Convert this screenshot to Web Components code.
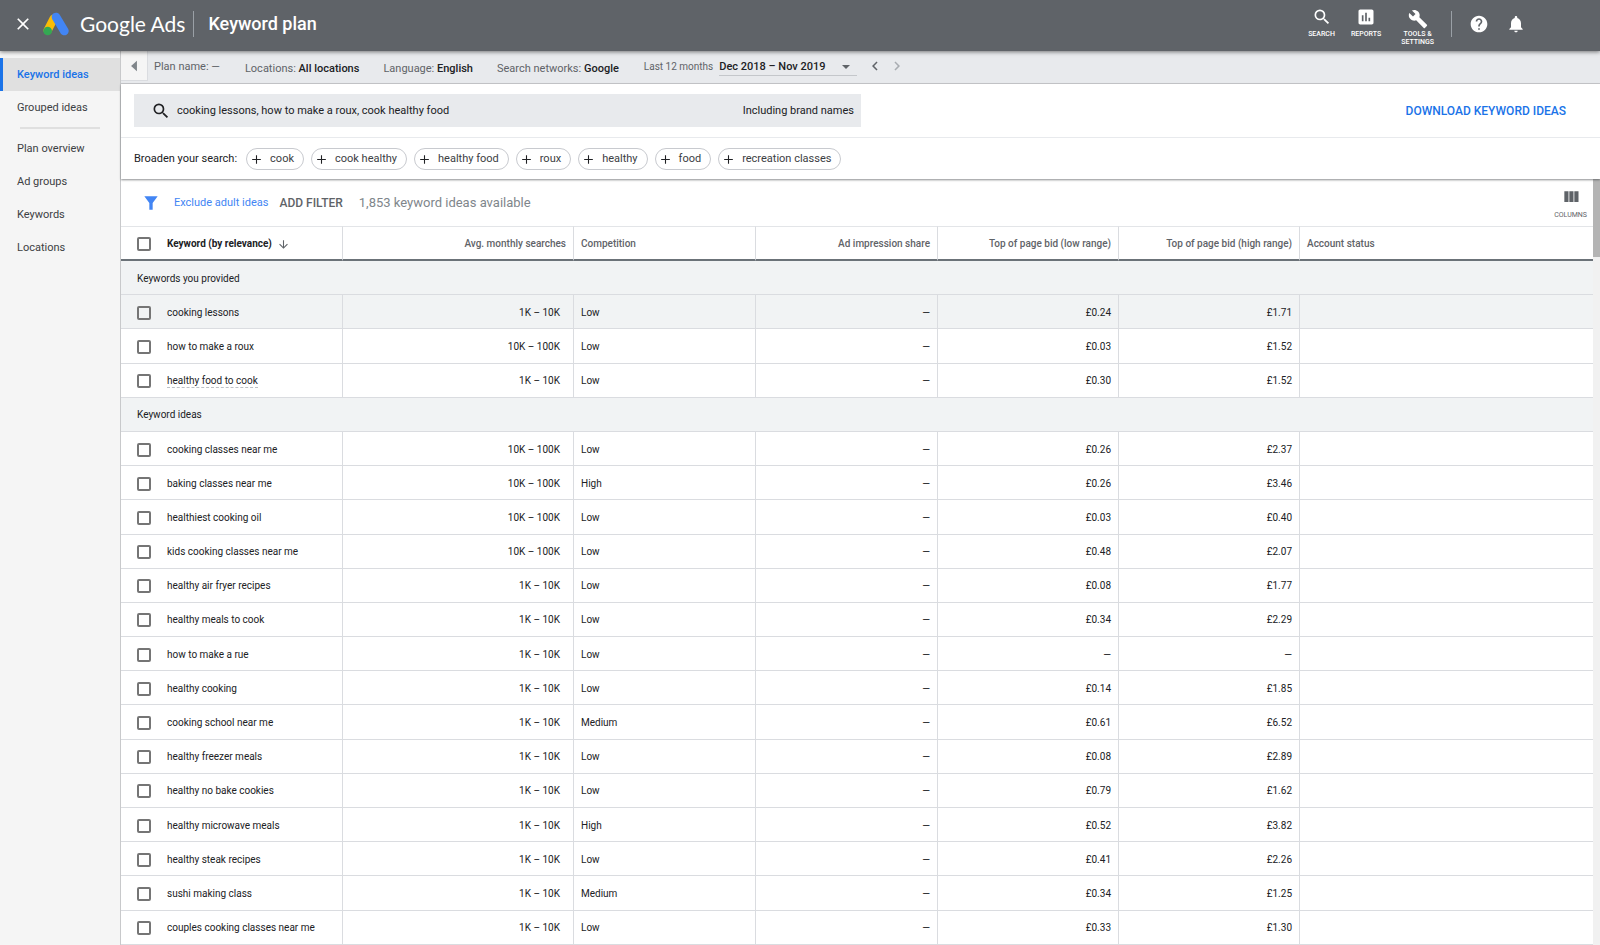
<!DOCTYPE html>
<html lang="en">
<head>
<meta charset="utf-8">
<meta name="viewport" content="width=device-width, initial-scale=1">
<title>Keyword plan - Google Ads</title>
<style>
  html, body {
    height: 100%;
    margin: 0;
  }
  body {
    font: 11px/16px Roboto, "Liberation Sans", sans-serif;
    color: #202124;
    background: #fff;
  }
</style>
</head>
<body>
<keyword-planner></keyword-planner>

<script>
const BASE_CSS = `
  *, *::after, *::before {
    box-sizing: border-box;
  }
  button, input, select {
    font: inherit;
    color: inherit;
    background: none;
    border: none;
    border-radius: 0;
    padding: 0;
    margin: 0;
    appearance: none;
  }
  button, select {
    cursor: pointer;
  }
  a {
    color: inherit;
    text-decoration: none;
  }
`;

const ICONS = {
  close: '<path d="M19 6.41 17.59 5 12 10.59 6.41 5 5 6.41 10.59 12 5 17.59 6.41 19 12 13.41 17.59 19 19 17.59 13.41 12z"/>',
  search: '<path d="M15.5 14h-.79l-.28-.27A6.47 6.47 0 0 0 16 9.5 6.5 6.5 0 1 0 9.5 16c1.61 0 3.09-.59 4.23-1.57l.27.28v.79l5 4.99L20.49 19l-4.99-5zm-6 0C7.01 14 5 11.99 5 9.5S7.01 5 9.5 5 14 7.01 14 9.5 11.99 14 9.5 14z"/>',
  reports: '<path d="M19 3H5c-1.1 0-2 .9-2 2v14c0 1.1.9 2 2 2h14c1.1 0 2-.9 2-2V5c0-1.1-.9-2-2-2zM9 17H7v-7h2v7zm4 0h-2V7h2v10zm4 0h-2v-4h2v4z"/>',
  tools: '<path d="m22.7 19-9.1-9.1c.9-2.3.4-5-1.5-6.9-2-2-5-2.4-7.4-1.3L9 6 6 9 1.6 4.7C.4 7.1.9 10.1 2.9 12.1c1.9 1.9 4.6 2.4 6.9 1.5l9.1 9.1c.4.4 1 .4 1.4 0l2.3-2.3c.5-.4.5-1.1.1-1.4z"/>',
  help: '<path d="M12 2C6.48 2 2 6.48 2 12s4.48 10 10 10 10-4.48 10-10S17.52 2 12 2zm1 17h-2v-2h2v2zm2.07-7.75-.9.92C13.45 12.9 13 13.5 13 15h-2v-.5c0-1.1.45-2.1 1.17-2.83l1.24-1.26c.37-.36.59-.86.59-1.41 0-1.1-.9-2-2-2s-2 .9-2 2H8c0-2.21 1.79-4 4-4s4 1.79 4 4c0 .88-.36 1.68-.93 2.25z"/>',
  bell: '<path d="M12 22c1.1 0 2-.9 2-2h-4c0 1.1.89 2 2 2zm6-6v-5c0-3.07-1.64-5.64-4.5-6.32V4c0-.83-.67-1.5-1.5-1.5s-1.5.67-1.5 1.5v.68C7.63 5.36 6 7.92 6 11v5l-2 2v1h16v-1l-2-2z"/>',
  plus: '<path d="M20 13h-7v7h-2v-7H4v-2h7V4h2v7h7z"/>',
  funnel: '<path d="M2 2h20l-7.5 10v10h-5V12z"/>',
  arrowDown: '<path d="m20 12-1.41-1.41L13 16.17V4h-2v12.17l-5.58-5.59L4 12l8 8z"/>',
  chevronLeft: '<path d="M15.41 7.41 14 6l-6 6 6 6 1.41-1.41L10.83 12z"/>',
  chevronRight: '<path d="M10 6 8.59 7.41 13.17 12l-4.58 4.59L10 18l6-6z"/>',
  triangleLeft: '<path d="M17 3v18L7 12z"/>',
  columns: '<path d="M10 18h5V5h-5v13zm-6 0h5V5H4v13zM16 5v13h5V5h-5z"/>',
};

class UiIcon extends HTMLElement {
  constructor() {
    super();
    this.attachShadow({ mode: 'open' });
  }

  connectedCallback() {
    this.shadowRoot.innerHTML = `
      <style>
        :host {
          display: inline-block;
          flex: none;
          width: 20px;
          height: 20px;
        }
        svg {
          display: block;
          width: 100%;
          height: 100%;
          fill: currentColor;
        }
      </style>
      <svg viewBox="0 0 24 24" aria-hidden="true">${ICONS[this.getAttribute('name')]}</svg>
    `;
  }
}

class AdsHeader extends HTMLElement {
  constructor() {
    super();
    this.attachShadow({ mode: 'open' });
    this.shadowRoot.innerHTML = `
      <style>
        ${BASE_CSS}
        :host {
          display: block;
          position: relative;
          z-index: 2;
          color: #fff;
          background: #5f6368;
          box-shadow: 0 1px 4px rgba(0, 0, 0, .5);
        }
        header {
          display: flex;
          align-items: center;
          height: 51px;
          padding: 0 74px 3px 13px;
        }
        button {
          display: flex;
          flex-direction: column;
          align-items: center;
        }
        .brand {
          display: flex;
          align-items: center;
          gap: 10px;
          margin-left: 9px;
          font: 21px/26px Lato, Roboto, sans-serif;
        }
        .brand svg {
          width: 28px;
          height: 26px;
        }
        .rule {
          width: 1px;
          height: 26px;
          background: #9aa0a6;
        }
        h1 {
          flex: 1;
          margin: 0 0 0 14px;
          font-size: 18px;
          font-weight: 500;
          line-height: 26px;
        }
        .brand + .rule {
          margin-left: 8px;
        }
        .tools {
          display: flex;
          align-items: flex-start;
          gap: 16px;
          height: 42px;
        }
        .tools button {
          font-size: 7px;
          font-weight: 500;
          line-height: 8px;
          gap: 3px;
        }
        .tools ui-icon {
          margin-top: 4px;
        }
        .tools .wrench {
          margin: 2px 0 0 4px;
          gap: 1px;
        }
        .end {
          display: flex;
          align-items: center;
          gap: 17px;
          margin-left: 17px;
        }
      </style>
      <header>
        <button type="button" aria-label="Close"><ui-icon name="close"></ui-icon></button>
        <a class="brand" href="#">
          <svg viewBox="126 30 84 78" aria-hidden="true">
            <path d="M161 53 143 88" stroke="#fbbc04" stroke-width="25" stroke-linecap="round"/>
            <path d="m168 48 25 42" stroke="#4285f4" stroke-width="26" stroke-linecap="round"/>
            <circle cx="143" cy="90" r="13" fill="#34a853"/>
          </svg>
          <span>Google Ads</span>
        </a>
        <span class="rule"></span>
        <h1>Keyword plan</h1>
        <div class="tools">
          <button type="button"><ui-icon name="search"></ui-icon><span>SEARCH</span></button>
          <button type="button"><ui-icon name="reports"></ui-icon><span>REPORTS</span></button>
          <button type="button" class="wrench"><ui-icon name="tools"></ui-icon><span>TOOLS &amp;<br>SETTINGS</span></button>
        </div>
        <div class="end">
          <span class="rule"></span>
          <button type="button" aria-label="Help"><ui-icon name="help"></ui-icon></button>
          <button type="button" aria-label="Notifications"><ui-icon name="bell"></ui-icon></button>
        </div>
      </header>
    `;
  }
}

class SideNav extends HTMLElement {
  constructor() {
    super();
    this.attachShadow({ mode: 'open' });
    this.shadowRoot.innerHTML = `
      <style>
        ${BASE_CSS}
        :host {
          display: block;
          flex: none;
          width: 121px;
          padding-top: 7px;
          background: #f5f5f5;
          border-right: 1px solid #c8c9cb;
        }
        a {
          display: block;
          padding: 0 17px;
          line-height: 33px;
          color: #3c4043;
        }
        a[aria-current] {
          padding-left: 14px;
          border-left: 3px solid #1a73e8;
          background: #e0e0e0;
          color: #1a73e8;
          font-weight: 500;
        }
        hr {
          height: 2px;
          margin: 3px 20px;
          border: none;
          background: #e0e0e0;
        }
      </style>
      <nav>
        <a href="#" aria-current="page">Keyword ideas</a>
        <a href="#">Grouped ideas</a>
        <hr>
        <a href="#">Plan overview</a>
        <a href="#">Ad groups</a>
        <a href="#">Keywords</a>
        <a href="#">Locations</a>
      </nav>
    `;
  }
}

class PlanToolbar extends HTMLElement {
  constructor() {
    super();
    this.attachShadow({ mode: 'open' });
    this.shadowRoot.innerHTML = `
      <style>
        ${BASE_CSS}
        :host {
          display: flex;
          align-items: flex-start;
          height: 33px;
          color: #5f6368;
          background: #e8eaed;
          border-bottom: 1px solid #c8c9cc;
        }
        .collapse {
          display: grid;
          place-items: center;
          width: 27px;
          height: 30px;
          color: #80868b;
          background: #f5f5f5;
          border: solid #dadce0;
          border-width: 0 1px 1px 0;
        }
        .collapse ui-icon {
          width: 14px;
          height: 14px;
        }
        .name {
          margin: 8px 25px 0 6px;
        }
        .facts {
          display: flex;
          gap: 24px;
          margin-top: 10px;
        }
        b {
          color: #202124;
          font-weight: 500;
        }
        .dates {
          display: flex;
          margin: 7px 0 0 25px;
          gap: 6px;
        }
        label {
          font-size: 10px;
          line-height: 18px;
        }
        .picker {
          display: flex;
          align-items: center;
          width: 138px;
          height: 18px;
          border-bottom: 1px solid #c4c7cb;
          position: relative;
        }
        select {
          width: 100%;
          color: #202124;
          font-weight: 500;
        }
        .picker::after {
          content: '';
          position: absolute;
          right: 7px;
          border: solid transparent;
          border-width: 4px 4px 0;
          border-top-color: #5f6368;
          pointer-events: none;
        }
        .step {
          display: flex;
          margin: 6px 0 0 9px;
          gap: 4px;
        }
        .step ui-icon {
          display: block;
          width: 18px;
          height: 18px;
        }
        .step button:disabled {
          color: #a8acb1;
        }
      </style>
      <button class="collapse" type="button" aria-label="Collapse menu"><ui-icon name="triangleLeft"></ui-icon></button>
      <span class="name">Plan name: —</span>
      <div class="facts">
        <span>Locations: <b>All locations</b></span>
        <span>Language: <b>English</b></span>
        <span>Search networks: <b>Google</b></span>
      </div>
      <div class="dates">
        <label for="range">Last 12 months</label>
        <span class="picker"><select id="range"><option>Dec 2018 – Nov 2019</option></select></span>
      </div>
      <div class="step">
        <button type="button" aria-label="Previous period"><ui-icon name="chevronLeft"></ui-icon></button>
        <button type="button" aria-label="Next period" disabled><ui-icon name="chevronRight"></ui-icon></button>
      </div>
    `;
  }
}

class SearchChip extends HTMLElement {
  constructor() {
    super();
    this.attachShadow({ mode: 'open' });
    this.shadowRoot.innerHTML = `
      <style>
        ${BASE_CSS}
        :host {
          display: block;
        }
        button {
          display: flex;
          align-items: center;
          gap: 7px;
          height: 22px;
          padding: 0 9px 0 3px;
          border: 1px solid #c8cacf;
          border-radius: 11px;
          color: #3c4043;
          white-space: nowrap;
        }
        ui-icon {
          width: 13px;
          height: 13px;
          color: #202124;
        }
      </style>
      <button type="button"><ui-icon name="plus"></ui-icon><span><slot></slot></span></button>
    `;
  }
}

class SearchPanel extends HTMLElement {
  constructor() {
    super();
    this.attachShadow({ mode: 'open' });
    this.shadowRoot.innerHTML = `
      <style>
        ${BASE_CSS}
        :host {
          display: block;
          position: relative;
          z-index: 1;
          background: #fff;
          box-shadow: 0 1px 2px rgba(60, 64, 67, .6);
        }
        .top {
          display: flex;
          align-items: center;
          justify-content: space-between;
          padding: 10px 34px 10px 13px;
          border-bottom: 1px solid #e8eaed;
        }
        .box {
          display: flex;
          align-items: center;
          flex: 0 1 727px;
          height: 33px;
          padding: 1px 7px 0 17px;
          gap: 6px;
          background: #e8eaed;
        }
        input {
          flex: 1;
          min-width: 0;
        }
        .download {
          color: #1a73e8;
          font-size: 12px;
          font-weight: 500;
        }
        .broaden {
          display: flex;
          align-items: center;
          flex-wrap: wrap;
          gap: 7px;
          padding: 10px 13px 9px;
        }
        .broaden > span {
          margin-right: 2px;
        }
      </style>
      <div class="top">
        <div class="box">
          <ui-icon name="search"></ui-icon>
          <input type="text" aria-label="Keywords" value="cooking lessons, how to make a roux, cook healthy food">
          <button type="button">Including brand names</button>
        </div>
        <button type="button" class="download">DOWNLOAD KEYWORD IDEAS</button>
      </div>
      <div class="broaden">
        <span>Broaden your search:</span>
        <search-chip>cook</search-chip>
        <search-chip>cook healthy</search-chip>
        <search-chip>healthy food</search-chip>
        <search-chip>roux</search-chip>
        <search-chip>healthy</search-chip>
        <search-chip>food</search-chip>
        <search-chip>recreation classes</search-chip>
      </div>
    `;
  }
}

class FilterBar extends HTMLElement {
  constructor() {
    super();
    this.attachShadow({ mode: 'open' });
    this.shadowRoot.innerHTML = `
      <style>
        ${BASE_CSS}
        :host {
          display: flex;
          align-items: center;
          height: 47px;
          padding: 0 6px 0 22px;
          color: #5f6368;
        }
        .funnel {
          width: 16px;
          height: 16px;
          color: #4285f4;
        }
        a {
          margin-left: 15px;
          color: #4285f4;
        }
        .add {
          margin-left: 11px;
          font-size: 12px;
          font-weight: 500;
        }
        .count {
          flex: 1;
          margin-left: 16px;
          font-size: 13px;
          color: #80868b;
        }
        .columns {
          display: flex;
          flex-direction: column;
          align-items: center;
          gap: 4px;
          font-size: 7px;
          line-height: 8px;
        }
      </style>
      <ui-icon class="funnel" name="funnel"></ui-icon>
      <a href="#">Exclude adult ideas</a>
      <button class="add" type="button">ADD FILTER</button>
      <span class="count">1,853 keyword ideas available</span>
      <button class="columns" type="button"><ui-icon name="columns"></ui-icon><span>COLUMNS</span></button>
    `;
  }
}

const HEADINGS = [
  { label: 'Avg. monthly searches', num: true },
  { label: 'Competition' },
  { label: 'Ad impression share', num: true },
  { label: 'Top of page bid (low range)', num: true },
  { label: 'Top of page bid (high range)', num: true },
  { label: 'Account status' },
];

// keyword, searches, competition, low bid, high bid
const GROUPS = [
  {
    title: 'Keywords you provided',
    rows: [
      ['cooking lessons', '1K – 10K', 'Low', '£0.24', '£1.71'],
      ['how to make a roux', '10K – 100K', 'Low', '£0.03', '£1.52'],
      ['healthy food to cook', '1K – 10K', 'Low', '£0.30', '£1.52'],
    ],
  },
  {
    title: 'Keyword ideas',
    rows: [
      ['cooking classes near me', '10K – 100K', 'Low', '£0.26', '£2.37'],
      ['baking classes near me', '10K – 100K', 'High', '£0.26', '£3.46'],
      ['healthiest cooking oil', '10K – 100K', 'Low', '£0.03', '£0.40'],
      ['kids cooking classes near me', '10K – 100K', 'Low', '£0.48', '£2.07'],
      ['healthy air fryer recipes', '1K – 10K', 'Low', '£0.08', '£1.77'],
      ['healthy meals to cook', '1K – 10K', 'Low', '£0.34', '£2.29'],
      ['how to make a rue', '1K – 10K', 'Low', '—', '—'],
      ['healthy cooking', '1K – 10K', 'Low', '£0.14', '£1.85'],
      ['cooking school near me', '1K – 10K', 'Medium', '£0.61', '£6.52'],
      ['healthy freezer meals', '1K – 10K', 'Low', '£0.08', '£2.89'],
      ['healthy no bake cookies', '1K – 10K', 'Low', '£0.79', '£1.62'],
      ['healthy microwave meals', '1K – 10K', 'High', '£0.52', '£3.82'],
      ['healthy steak recipes', '1K – 10K', 'Low', '£0.41', '£2.26'],
      ['sushi making class', '1K – 10K', 'Medium', '£0.34', '£1.25'],
      ['couples cooking classes near me', '1K – 10K', 'Low', '£0.33', '£1.30'],
    ],
  },
];

class KeywordTable extends HTMLElement {
  constructor() {
    super();
    this.attachShadow({ mode: 'open' });
    this.shadowRoot.innerHTML = `
      <style>
        ${BASE_CSS}
        :host {
          display: grid;
        }
        table {
          width: 100%;
          height: 100%;
          table-layout: fixed;
          border-collapse: separate;
          border-spacing: 0;
        }
        .keyword { width: 222px; }
        .searches { width: 231px; }
        .metric { width: 182px; }
        .bid { width: 181px; }
        th, td {
          height: 34px;
          padding: 2px 7px 0;
          border: solid #dadce0;
          border-width: 0 1px 1px 0;
          text-align: left;
          font-size: 10px;
          font-weight: 400;
          white-space: nowrap;
        }
        th:last-child, td:last-child {
          border-right: none;
        }
        thead th {
          height: 35px;
          border-top: 1px solid #e3e5e8;
          border-bottom: 2px solid #6b7278;
          color: #5f6368;
          font-weight: 500;
        }
        .num {
          text-align: right;
        }
        td.range {
          padding-right: 13px;
        }
        th:first-child {
          padding-left: 16px;
        }
        .group th, .active > * {
          background: #f1f3f4;
        }
        .pick {
          display: flex;
          align-items: center;
          gap: 16px;
        }
        .sort {
          display: flex;
          align-items: center;
          gap: 5px;
          color: #202124;
          font-weight: 700;
        }
        .sort ui-icon {
          width: 13px;
          height: 13px;
          color: #5f6368;
        }
        input {
          flex: none;
          width: 14px;
          height: 14px;
          border: 2px solid #757575;
          border-radius: 2px;
        }
        input:checked {
          background: #1a73e8;
        }
        .hint {
          border-bottom: 1px dashed #bdc1c6;
          line-height: 13px;
        }
      </style>
      <table>
        <colgroup>
          <col class="keyword"><col class="searches">
          <col class="metric"><col class="metric"><col class="bid"><col class="bid">
          <col>
        </colgroup>
        <thead></thead>
        <tbody></tbody>
      </table>
    `;

    this.els = {
      head: this.shadowRoot.querySelector('thead'),
      body: this.shadowRoot.querySelector('tbody'),
    };
    this.count = 0;
  }

  connectedCallback() {
    this.els.head.innerHTML = `
      <tr>
        <th scope="col">
          <div class="pick">
            <input type="checkbox" aria-label="Select all keywords">
            <button class="sort" type="button">Keyword (by relevance)<ui-icon name="arrowDown"></ui-icon></button>
          </div>
        </th>
        ${HEADINGS.map(({ label, num }) => `<th scope="col" class="${num ? 'num' : ''}">${label}</th>`).join('')}
      </tr>
    `;
    this.els.body.innerHTML = GROUPS.map(({ title, rows }) => `
      <tr class="group"><th colspan="7" scope="colgroup">${title}</th></tr>
      ${rows.map(row => this.renderRow(row)).join('')}
    `).join('');
  }

  renderRow([keyword, searches, competition, low, high]) {
    const id = `keyword-${this.count++}`;
    const active = keyword === 'cooking lessons' ? 'active' : '';
    const hint = keyword === 'healthy food to cook' ? 'hint' : '';
    return `
      <tr class="${active}">
        <th scope="row">
          <div class="pick">
            <input type="checkbox" id="${id}">
            <label class="${hint}" for="${id}">${keyword}</label>
          </div>
        </th>
        <td class="num range">${searches}</td>
        <td>${competition}</td>
        <td class="num">—</td>
        <td class="num">${low}</td>
        <td class="num">${high}</td>
        <td></td>
      </tr>
    `;
  }
}

class KeywordPlanner extends HTMLElement {
  constructor() {
    super();
    this.attachShadow({ mode: 'open' });
    this.shadowRoot.innerHTML = `
      <style>
        ${BASE_CSS}
        :host {
          display: flex;
          flex-direction: column;
          min-height: 100%;
        }
        .body, main, .results {
          display: flex;
          flex: 1;
          min-width: 0;
        }
        main, .list {
          flex-direction: column;
        }
        .list {
          display: flex;
          flex: 1;
          min-width: 0;
        }
        keyword-table {
          flex: 1;
        }
        .track {
          flex: none;
          width: 7px;
          background: #f1f1f1;
        }
        .thumb {
          height: 78px;
          background: #b4b4b4;
        }
      </style>
      <ads-header></ads-header>
      <div class="body">
        <side-nav></side-nav>
        <main>
          <plan-toolbar></plan-toolbar>
          <search-panel></search-panel>
          <div class="results">
            <div class="list">
              <filter-bar></filter-bar>
              <keyword-table></keyword-table>
            </div>
            <div class="track"><div class="thumb"></div></div>
          </div>
        </main>
      </div>
    `;
  }
}

window.customElements.define('ui-icon', UiIcon);
window.customElements.define('ads-header', AdsHeader);
window.customElements.define('side-nav', SideNav);
window.customElements.define('plan-toolbar', PlanToolbar);
window.customElements.define('search-chip', SearchChip);
window.customElements.define('search-panel', SearchPanel);
window.customElements.define('filter-bar', FilterBar);
window.customElements.define('keyword-table', KeywordTable);
window.customElements.define('keyword-planner', KeywordPlanner);
</script>
</body>
</html>
